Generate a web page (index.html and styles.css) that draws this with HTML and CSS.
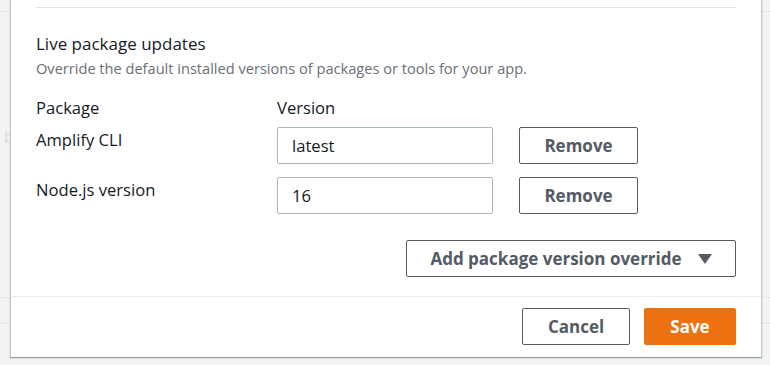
FILE: index.html
```html
<!DOCTYPE html>
<html lang="en">
<head>
    <meta charset="UTF-8">
    <title>Edit build image settings</title>
    <link rel="stylesheet" href="styles.css">
</head>
<body>
    <div class="page">
        <div class="bg-table">
            <div class="bg-row bg-row-top"></div>
            <div class="bg-row bg-row-cell"><span class="bg-text">b</span></div>
            <div class="bg-row bg-row-low"></div>
            <div class="bg-row"></div>
        </div>

        <div class="modal">
            <div class="modal-body">
                <div class="prev-section"></div>
                <section class="packages">
                    <h3 class="section-title">Live package updates</h3>
                    <p class="section-desc">Override the default installed versions of packages or tools for your app.</p>

                    <div class="pkg-grid">
                        <div class="col-head">Package</div>
                        <div class="col-head">Version</div>
                        <div></div>

                        <div class="pkg-name">Amplify CLI</div>
                        <div><input class="text-input" type="text" value="latest"></div>
                        <div><button class="btn btn-remove">Remove</button></div>

                        <div class="pkg-name">Node.js version</div>
                        <div><input class="text-input" type="text" value="16"></div>
                        <div><button class="btn btn-remove">Remove</button></div>
                    </div>

                    <div class="add-row">
                        <button class="btn btn-dropdown">
                            Add package version override
                            <svg class="caret" width="14" height="10" viewBox="0 0 14 10">
                                <path d="M0 0 H14 L7 10 Z" fill="currentColor"/>
                            </svg>
                        </button>
                    </div>
                </section>
            </div>
            <div class="modal-footer">
                <button class="btn btn-cancel">Cancel</button>
                <button class="btn btn-primary">Save</button>
            </div>
        </div>
    </div>
</body>
</html>
```

FILE: styles.css
```css
:root {
    --page-bg: #f2f3f3;
    --text-color: #16191f;
    --muted-color: #687078;
    --button-color: #545b64;
    --input-border: #aab7b8;
    --divider: #eaeded;
    --primary: #ec7211;
}

* {
    box-sizing: border-box;
}

body {
    margin: 0;
    padding: 0;
    background-color: var(--page-bg);
    font-family: 'Open Sans', 'Noto Sans', sans-serif;
    color: var(--text-color);
    overflow: hidden;
}

.page {
    position: relative;
    width: 770px;
    height: 365px;
}

/* table of the page behind the dialog */
.bg-table {
    display: flex;
    flex-direction: column;
}

.bg-row {
    border-bottom: 1px solid #e4e7e7;
}

.bg-row-top {
    height: 12px;
}

.bg-row-cell {
    height: 286px;
    padding: 114px 0 0 4px;
}

.bg-text {
    font-size: 16px;
    color: #d9dcdc;
}

.bg-row-low {
    height: 25px;
    border-bottom-color: #ebeded;
}

/* dialog */
.modal {
    position: absolute;
    left: 10px;
    top: 0;
    width: 752px;
    background: #fff;
    border-left: 1px solid #c6cccc;
    border-right: 1px solid #c6cccc;
    box-shadow: 0 1px 1px rgba(0, 28, 36, 0.4);
}

.modal-body {
    padding: 0 25px;
}

.prev-section {
    height: 8px;
    border-bottom: 1px solid #dfe3e3;
}

.packages {
    padding: 25px 0 19px;
}

.section-title {
    margin: 0;
    font-size: 17px;
    line-height: 22px;
    font-weight: normal;
}

.section-desc {
    margin: 3px 0 0;
    font-size: 14.6px;
    line-height: 20px;
    color: var(--muted-color);
}

.pkg-grid {
    display: grid;
    grid-template-columns: 241px 242px 119px;
    row-gap: 13px;
    margin-top: 19px;
}

.pkg-grid > div:nth-child(-n+3) {
    margin-bottom: -5px;
}

.col-head,
.pkg-name {
    font-size: 16.6px;
    line-height: 22px;
}

.pkg-name {
    padding-top: 2px;
}

.text-input {
    display: block;
    width: 216px;
    height: 37px;
    padding: 0 14px;
    border: 1px solid var(--input-border);
    border-radius: 2px;
    font-family: inherit;
    font-size: 16.6px;
    color: var(--text-color);
    background: #fff;
}

.btn {
    height: 37px;
    padding: 0 10px;
    border: 1px solid var(--button-color);
    border-radius: 2px;
    background: #fff;
    color: var(--button-color);
    font-family: inherit;
    font-size: 17px;
    font-weight: bold;
    cursor: pointer;
}

.btn-remove {
    width: 119px;
}

.add-row {
    display: flex;
    justify-content: flex-end;
    margin-top: 26px;
}

.btn-dropdown {
    width: 330px;
    display: flex;
    align-items: center;
    justify-content: center;
    gap: 16px;
}

.caret {
    display: block;
}

.modal-footer {
    display: flex;
    justify-content: flex-end;
    gap: 14px;
    padding: 11px 25px 12px;
    border-top: 1px solid var(--divider);
}

.btn-cancel {
    width: 108px;
}

.btn-primary {
    width: 92px;
    background: var(--primary);
    border-color: var(--primary);
    color: #fff;
}
```
